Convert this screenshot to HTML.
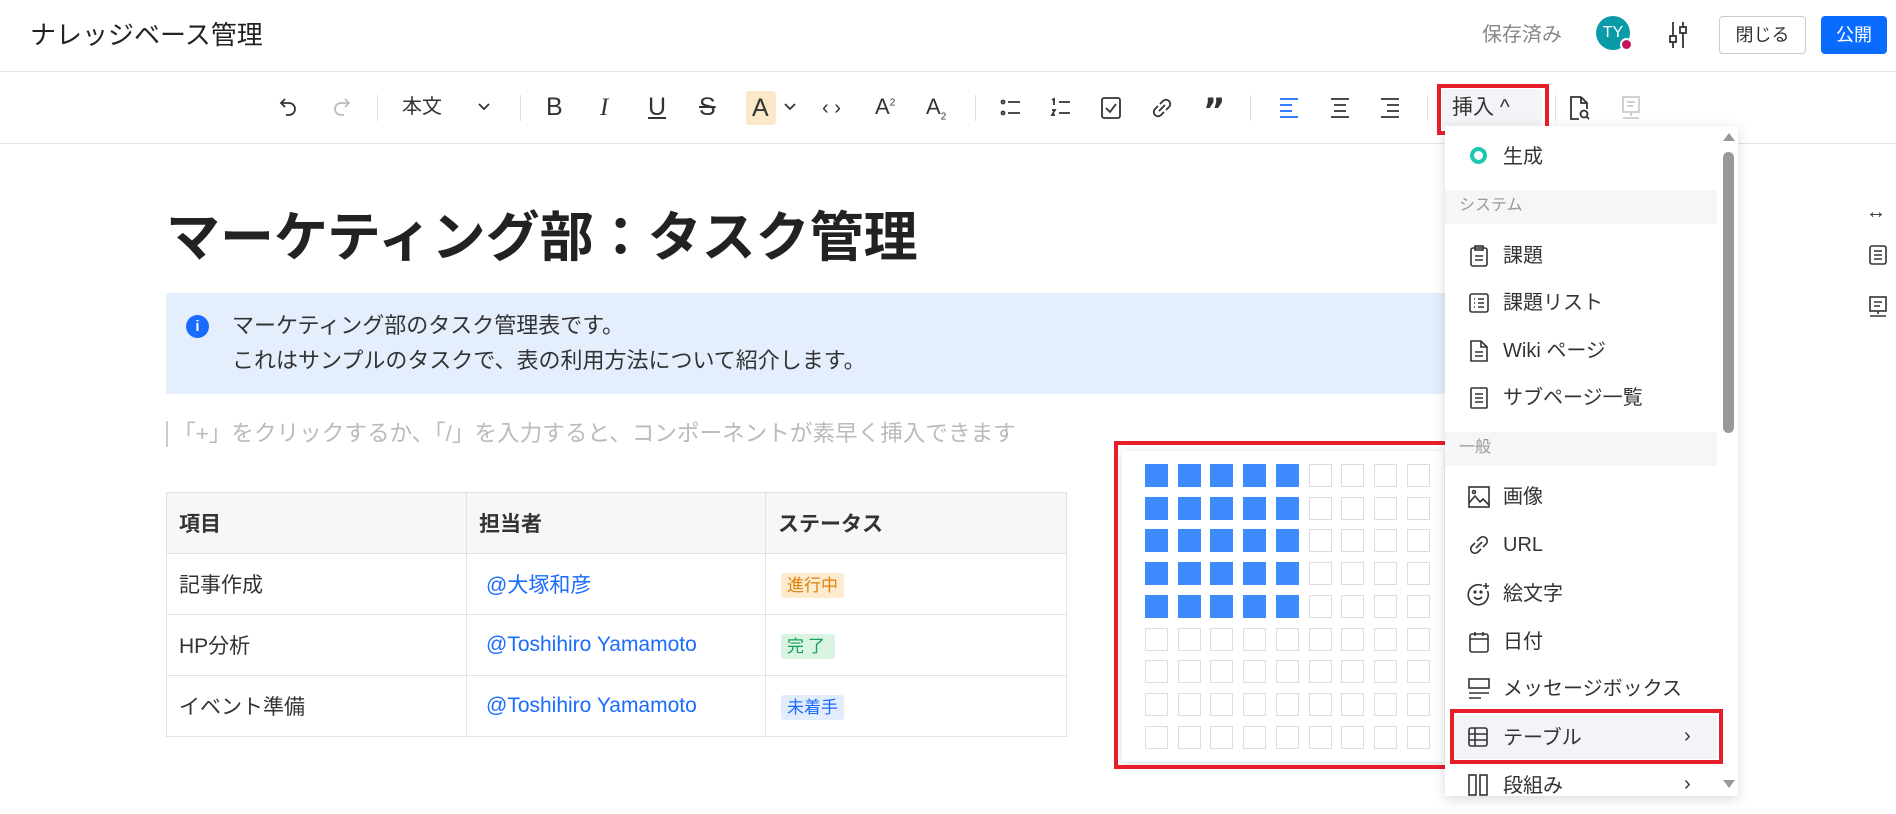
<!DOCTYPE html>
<html><head><meta charset="utf-8"><style>
*{margin:0;padding:0;box-sizing:border-box}
body{width:1896px;height:814px;overflow:hidden;background:#fff;font-family:"Liberation Sans","Noto Sans CJK JP",sans-serif;color:#333;position:relative}
.a{position:absolute}
.t{position:absolute;white-space:nowrap;line-height:1}
.sep{position:absolute;top:95px;width:1px;height:26px;background:#ddd}
.mi{position:absolute;left:1503px;font-size:20px;color:#333;line-height:1;white-space:nowrap}
.cell{position:absolute;width:23px;height:23px;border:1px solid #ddd;background:#fff}
.cell.on{background:#3d8bfd;border-color:#3d8bfd}
td{border:1px solid #e2e2e2;font-size:21px;padding-left:12px;height:61px}
</style></head><body>
<div class="t" style="left:30px;top:22px;font-size:26px;color:#222">ナレッジベース管理</div>
<div class="t" style="left:1482px;top:25px;font-size:20px;color:#888">保存済み</div>
<div class="a" style="left:1596px;top:16px;width:34px;height:34px;border-radius:50%;background:#0a9aa8;color:#fff;font-size:16px;text-align:center;line-height:34px">TY</div>
<div class="a" style="left:1620px;top:38px;width:13px;height:13px;border-radius:50%;background:#c2185b;border:2px solid #fff"></div>
<svg class="a" style="left:1666px;top:20px" width="24" height="30" viewBox="0 0 24 30" fill="none" stroke="#333" stroke-width="1.8"><line x1="7" y1="2" x2="7" y2="28"/><line x1="17" y1="2" x2="17" y2="28"/><rect x="4" y="16" width="6" height="6" fill="#fff"/><rect x="14" y="7" width="6" height="6" fill="#fff"/></svg>
<div class="a" style="left:1719px;top:16px;width:87px;height:38px;border:1px solid #ccc;border-radius:4px;font-size:18px;text-align:center;line-height:36px">閉じる</div>
<div class="a" style="left:1821px;top:16px;width:66px;height:38px;background:#0a6cff;border-radius:4px;color:#fff;font-size:18px;text-align:center;line-height:38px">公開</div>
<div class="a" style="left:0;top:71px;width:1896px;height:1px;background:#e2e2e2"></div>
<svg class="a" style="left:278px;top:96px" width="22" height="22" viewBox="0 0 22 22" fill="none" stroke="#333" stroke-width="1.8"><path d="M7 3 3 7l4 4"/><path d="M3 7h8a6 6 0 0 1 0 12H8"/></svg>
<svg class="a" style="left:330px;top:96px" width="22" height="22" viewBox="0 0 22 22" fill="none" stroke="#bbb" stroke-width="1.8"><path d="M15 3l4 4-4 4"/><path d="M19 7h-8a6 6 0 0 0 0 12h3"/></svg>
<div class="sep" style="left:377px"></div>
<div class="t" style="left:402px;top:97px;font-size:20px">本文</div>
<svg class="a" style="left:477px;top:101px" width="14" height="12" viewBox="0 0 14 12" fill="none" stroke="#333" stroke-width="1.8"><path d="M2 3l5 5 5-5"/></svg>
<div class="sep" style="left:520px"></div>
<div class="t" style="left:546px;top:95px;font-size:25px">B</div>
<div class="t" style="left:600px;top:95px;font-size:25px;font-family:'Liberation Serif';font-style:italic">I</div>
<div class="t" style="left:648px;top:95px;font-size:25px;text-decoration:underline">U</div>
<div class="t" style="left:699px;top:95px;font-size:25px;text-decoration:line-through">S</div>
<div class="a" style="left:746px;top:91px;width:30px;height:34px;background:#fbe8c8;border-radius:3px"></div>
<div class="t" style="left:752px;top:96px;font-size:25px">A</div>
<svg class="a" style="left:783px;top:101px" width="14" height="12" viewBox="0 0 14 12" fill="none" stroke="#333" stroke-width="1.8"><path d="M2 3l5 5 5-5"/></svg>
<div class="t" style="left:822px;top:98px;font-size:20px">‹ ›</div>
<div class="t" style="left:875px;top:96px;font-size:22px">A<sup style="font-size:10px">2</sup></div>
<div class="t" style="left:926px;top:96px;font-size:22px">A<sub style="font-size:10px">2</sub></div>
<div class="sep" style="left:975px"></div>
<svg class="a" style="left:1000px;top:97px" width="22" height="22" viewBox="0 0 22 22" fill="none" stroke="#333" stroke-width="1.8"><circle cx="3" cy="5" r="1.5"/><circle cx="3" cy="16" r="1.5"/><path d="M8 5h12M8 16h12"/></svg>
<svg class="a" style="left:1050px;top:97px" width="22" height="22" viewBox="0 0 22 22" fill="none" stroke="#333" stroke-width="1.8"><path d="M2 3l2-1v6M2 13h3l-3 5h3M9 5h11M9 16h11"/></svg>
<svg class="a" style="left:1100px;top:96px" width="22" height="24" viewBox="0 0 22 24" fill="none" stroke="#333" stroke-width="1.8"><rect x="2" y="2" width="18" height="20" rx="2"/><path d="M6 12l4 4 6-8"/></svg>
<svg class="a" style="left:1151px;top:96px" width="22" height="24" viewBox="0 0 22 24" fill="none" stroke="#333" stroke-width="1.8"><path d="M9 8l3-3a4 4 0 0 1 6 6l-3 3M13 16l-3 3a4 4 0 0 1-6-6l3-3M8 15l6-6"/></svg>
<div class="t" style="left:1203px;top:94px;font-size:34px;font-weight:bold;font-family:'DejaVu Sans'">”</div>
<div class="sep" style="left:1250px"></div>
<svg class="a" style="left:1278px;top:96px" width="22" height="24" viewBox="0 0 22 24" fill="none" stroke="#1a6cff" stroke-width="1.8"><path d="M2 3h18M2 9h12M2 15h12M2 21h18"/></svg>
<svg class="a" style="left:1329px;top:96px" width="22" height="24" viewBox="0 0 22 24" fill="none" stroke="#333" stroke-width="1.8"><path d="M2 3h18M5 9h12M5 15h12M2 21h18"/></svg>
<svg class="a" style="left:1379px;top:96px" width="22" height="24" viewBox="0 0 22 24" fill="none" stroke="#333" stroke-width="1.8"><path d="M2 3h18M8 9h12M8 15h12M2 21h18"/></svg>
<div class="sep" style="left:1427px"></div>
<div class="a" style="left:1442px;top:89px;width:100px;height:40px;background:#f3f4f7;border-radius:4px"></div>
<div class="t" style="left:1452px;top:97px;font-size:21px">挿入 ^</div>
<div class="a" style="left:1437px;top:84px;width:112px;height:51px;border:4px solid #e61e2a"></div>
<div class="sep" style="left:1555px"></div>
<svg class="a" style="left:1568px;top:95px" width="22" height="26" viewBox="0 0 22 26" fill="none" stroke="#333" stroke-width="1.8"><path d="M13 2H3v22h8M13 2l6 6v6M13 2v6h6"/><circle cx="16" cy="19" r="3.5"/><path d="M18.5 21.5 21 24"/></svg>
<svg class="a" style="left:1620px;top:95px" width="22" height="26" viewBox="0 0 22 26" fill="none" stroke="#ccc" stroke-width="1.8"><rect x="3" y="2" width="16" height="15"/><path d="M7 7h8M7 11h6M11 17v4M3 23h16"/></svg>
<div class="a" style="left:0;top:143px;width:1896px;height:1px;background:#e2e2e2"></div>
<div class="t" style="left:1866px;top:202px;font-size:20px">↔</div>
<svg class="a" style="left:1869px;top:245px" width="18" height="20" viewBox="0 0 18 20" fill="none" stroke="#333" stroke-width="1.6"><rect x="1" y="1" width="16" height="18" rx="2"/><path d="M5 6h8M5 10h8M5 14h8"/></svg>
<svg class="a" style="left:1869px;top:296px" width="18" height="22" viewBox="0 0 18 22" fill="none" stroke="#333" stroke-width="1.6"><rect x="1" y="1" width="16" height="14"/><path d="M5 6h8M5 10h6M9 15v3M1 20h16"/></svg>
<div class="t" style="left:166px;top:211px;font-size:54px;font-weight:bold;color:#222">マーケティング部：タスク管理</div>
<div class="a" style="left:166px;top:293px;width:1300px;height:101px;background:#e4eefd"></div>
<div class="a" style="left:186px;top:315px;width:23px;height:23px;border-radius:50%;background:#1a6cff;color:#fff;font-size:15px;font-weight:bold;text-align:center;line-height:23px">i</div>
<div class="t" style="left:232px;top:315px;font-size:22px;color:#333">マーケティング部のタスク管理表です。</div>
<div class="t" style="left:232px;top:350px;font-size:22px;color:#333">これはサンプルのタスクで、表の利用方法について紹介します。</div>
<div class="a" style="left:166px;top:421px;width:2px;height:26px;background:#ccc"></div>
<div class="t" style="left:173px;top:423px;font-size:22.6px;color:#bbb">「+」をクリックするか、「/」を入力すると、コンポーネントが素早く挿入できます</div>
<table class="a" style="left:166px;top:492px;width:901px;border-collapse:collapse">
<tr style="background:#f6f7f8"><td style="width:300px;font-weight:bold">項目</td><td style="width:299px;font-weight:bold">担当者</td><td style="font-weight:bold">ステータス</td></tr>
<tr><td>記事作成</td><td style="color:#1a6cff;padding-left:19px">@大塚和彦</td><td style="padding-left:15px"><span style="background:#fdebcf;color:#e0820a;font-size:17px;padding:3px 6px;border-radius:3px">進行中</span></td></tr>
<tr><td>HP分析</td><td style="color:#1a6cff;padding-left:19px">@Toshihiro Yamamoto</td><td style="padding-left:15px"><span style="background:#daf4e4;color:#17a05a;font-size:17px;padding:3px 6px;border-radius:3px;letter-spacing:4px">完了</span></td></tr>
<tr><td>イベント準備</td><td style="color:#1a6cff;padding-left:19px">@Toshihiro Yamamoto</td><td style="padding-left:15px"><span style="background:#e2ecfc;color:#1a6cff;font-size:17px;padding:3px 6px;border-radius:3px">未着手</span></td></tr>
</table>
<div class="a" style="left:1122px;top:451px;width:322px;height:311px;background:#fff;box-shadow:0 2px 10px rgba(0,0,0,.15)"></div>
<div id="g"></div>
<div class="a" style="left:1114px;top:441px;width:336px;height:328px;border:4px solid #e61e2a"></div>
<div class="a" style="left:1445px;top:126px;width:293px;height:670px;background:#fff;box-shadow:0 3px 12px rgba(0,0,0,.15)"></div>
<div class="a" style="left:1470px;top:147px;width:17px;height:17px;border-radius:50%;border:4px solid #1fc6b0"></div>
<div class="mi" style="top:147px">生成</div>
<div class="a" style="left:1445px;top:190px;width:272px;height:34px;background:#f5f6f8"></div>
<div class="t" style="left:1459px;top:198px;font-size:16px;color:#999">システム</div>
<svg class="a" style="left:1470px;top:245px" width="18" height="22" viewBox="0 0 18 22" fill="none" stroke="#333" stroke-width="1.6"><rect x="1" y="3" width="16" height="18" rx="2"/><rect x="5" y="1" width="8" height="4"/><path d="M5 11h8M5 15h8"/></svg>
<div class="mi" style="top:246px">課題</div>
<svg class="a" style="left:1469px;top:293px" width="20" height="20" viewBox="0 0 20 20" fill="none" stroke="#333" stroke-width="1.6"><rect x="1" y="1" width="18" height="18" rx="2"/><path d="M5 6h1M9 6h6M5 10h1M9 10h6M5 14h1M9 14h6"/></svg>
<div class="mi" style="top:293px">課題リスト</div>
<svg class="a" style="left:1470px;top:340px" width="18" height="22" viewBox="0 0 18 22" fill="none" stroke="#333" stroke-width="1.6"><path d="M11 1H1v20h16V7zM11 1v6h6M5 12h8M5 16h8"/></svg>
<div class="mi" style="top:341px">Wiki ページ</div>
<svg class="a" style="left:1470px;top:387px" width="18" height="22" viewBox="0 0 18 22" fill="none" stroke="#333" stroke-width="1.6"><rect x="1" y="1" width="16" height="20" rx="1"/><path d="M5 7h8M5 11h8M5 15h8"/></svg>
<div class="mi" style="top:388px">サブページ一覧</div>
<div class="a" style="left:1445px;top:432px;width:272px;height:34px;background:#f5f6f8"></div>
<div class="t" style="left:1459px;top:440px;font-size:16px;color:#999">一般</div>
<svg class="a" style="left:1468px;top:486px" width="22" height="22" viewBox="0 0 22 22" fill="none" stroke="#333" stroke-width="1.6"><rect x="1" y="1" width="20" height="20"/><circle cx="6" cy="6" r="1.5"/><path d="M1 17l6-7 5 6 3-3 6 6"/></svg>
<div class="mi" style="top:487px">画像</div>
<svg class="a" style="left:1468px;top:534px" width="22" height="22" viewBox="0 0 22 22" fill="none" stroke="#333" stroke-width="1.6"><path d="M9 7l3-3a4 4 0 0 1 6 6l-3 3M13 15l-3 3a4 4 0 0 1-6-6l3-3M8 14l6-6"/></svg>
<div class="mi" style="top:535px">URL</div>
<svg class="a" style="left:1467px;top:582px" width="24" height="24" viewBox="0 0 24 24" fill="none" stroke="#333" stroke-width="1.6"><path d="M15 3.5A10 10 0 1 0 20.5 9"/><path d="M19 1v6M16 4h6"/><circle cx="8" cy="10" r=".8"/><circle cx="14" cy="10" r=".8"/><path d="M7 15q4 4 8 0"/></svg>
<div class="mi" style="top:584px">絵文字</div>
<svg class="a" style="left:1469px;top:631px" width="20" height="22" viewBox="0 0 20 22" fill="none" stroke="#333" stroke-width="1.6"><rect x="1" y="3" width="18" height="18" rx="2"/><path d="M1 8h18M6 1v4M14 1v4"/></svg>
<div class="mi" style="top:632px">日付</div>
<svg class="a" style="left:1468px;top:678px" width="22" height="22" viewBox="0 0 22 22" fill="none" stroke="#333" stroke-width="1.6"><rect x="1" y="1" width="20" height="9"/><path d="M1 15h20M1 20h12"/></svg>
<div class="mi" style="top:679px">メッセージボックス</div>
<div class="a" style="left:1451px;top:716px;width:266px;height:43px;background:#f3f4f7"></div>
<svg class="a" style="left:1468px;top:727px" width="20" height="20" viewBox="0 0 20 20" fill="none" stroke="#333" stroke-width="1.6"><rect x="1" y="1" width="18" height="18" rx="2"/><path d="M1 7h18M1 13h18M7 1v18"/></svg>
<div class="mi" style="top:728px">テーブル</div>
<div class="t" style="left:1684px;top:726px;font-size:20px">›</div>
<div class="a" style="left:1450px;top:709px;width:273px;height:55px;border:4px solid #e61e2a"></div>
<svg class="a" style="left:1468px;top:774px" width="20" height="22" viewBox="0 0 20 22" fill="none" stroke="#333" stroke-width="1.6"><rect x="1" y="1" width="7" height="20"/><rect x="12" y="1" width="7" height="20"/></svg>
<div class="mi" style="top:776px">段組み</div>
<div class="t" style="left:1684px;top:774px;font-size:20px">›</div>
<div class="a" style="left:1723px;top:152px;width:11px;height:281px;background:#999;border-radius:6px"></div>
<div class="a" style="left:1723px;top:133px;width:0;height:0;border-left:6px solid transparent;border-right:6px solid transparent;border-bottom:8px solid #999"></div>
<div class="a" style="left:1723px;top:780px;width:0;height:0;border-left:6px solid transparent;border-right:6px solid transparent;border-top:8px solid #999"></div>
<script>
var g=document.getElementById('g'),h='';
for(var r=0;r<9;r++)for(var c=0;c<9;c++){h+='<div class="cell'+(r<5&&c<5?' on':'')+'" style="left:'+(1145+c*32.7)+'px;top:'+(464+r*32.7)+'px"></div>';}
g.innerHTML=h;
</script>
</body></html>
